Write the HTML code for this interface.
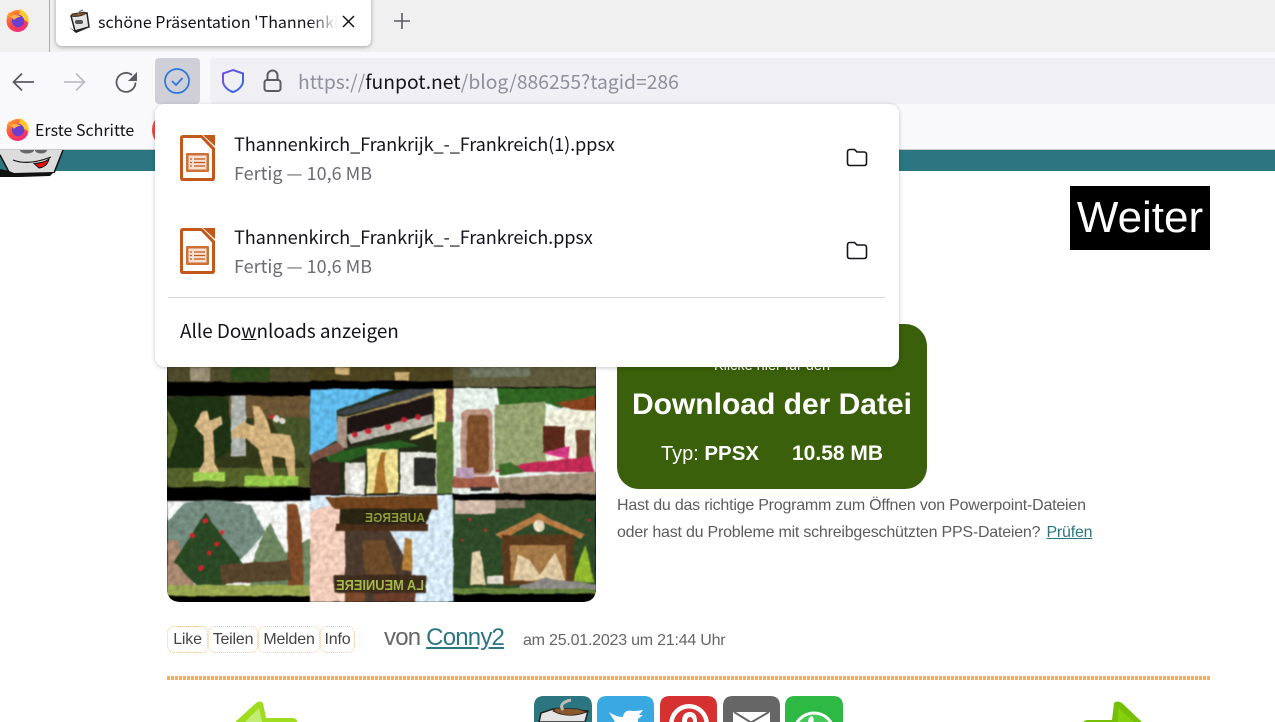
<!DOCTYPE html>
<html lang="de"><head><meta charset="utf-8"><title>schöne Präsentation 'Thannenkirch'</title>
<style>
*{box-sizing:border-box}
html,body{margin:0;padding:0;width:1275px;height:722px;overflow:hidden;background:#fff;font-family:"Liberation Sans",sans-serif}
.a{position:absolute;white-space:nowrap}
.ui{font-family:"Noto Sans CJK SC","Liberation Sans",sans-serif}
.btn{position:absolute;top:626px;height:27px;border:1px dotted #fdc58c;border-radius:7px;font-size:16px;line-height:26px;text-align:center;color:#444;letter-spacing:-.2px}
svg{position:absolute;overflow:visible}
</style></head><body>

<!-- page content -->
<div class="a" style="left:0;top:150px;width:1275px;height:21px;background:#2b7681"></div>
<svg style="left:0;top:150px" width="70" height="30" viewBox="0 0 70 30">
<path d="M0 4L8 20L10 24L53 23L63 0H0Z" fill="#dcdcdc"/>
<path d="M63 0L54 23" fill="none" stroke="#111" stroke-width="1.500"/>
<path d="M0 5L9 22" fill="none" stroke="#111" stroke-width="1.500"/>
<path d="M0 19L9 21L14 23L54 22L50 26L20 27L0 27Z" fill="#111"/>
<ellipse cx="27" cy="0" rx="7" ry="3.500" fill="#666"/><ellipse cx="41" cy="0" rx="6" ry="3.500" fill="#666"/>
<path d="M13 10Q28 16 51 7" fill="none" stroke="#111" stroke-width="1.200"/>
<path d="M34 13.500Q44 13 49 9Q47 17 39 18Z" fill="#e81010" stroke="#111"/>
</svg>
<div class="a" style="left:1070px;top:186px;width:140px;height:64px;background:#000;color:#fff;font-size:44px;line-height:64px;text-align:center">Weiter</div>

<!-- collage -->
<svg style="left:0;top:0" width="1275" height="722" viewBox="0 0 1275 722">
<defs>
<clipPath id="c"><path d="M167 360H596V588Q596 602 582 602H181Q167 602 167 588Z"/></clipPath>
<filter id="b" filterUnits="userSpaceOnUse" x="167" y="360" width="429" height="242" color-interpolation-filters="sRGB">
<feTurbulence type="fractalNoise" baseFrequency=".07" numOctaves="1" seed="4" result="n"/>
<feDisplacementMap in="SourceGraphic" in2="n" scale="3" xChannelSelector="R" yChannelSelector="G" result="d"/>
<feTurbulence type="fractalNoise" baseFrequency=".2" numOctaves="2" seed="9"/>
<feColorMatrix type="matrix" values="1.400 0 0 0 -.2 1.400 0 0 0 -.2 1.400 0 0 0 -.2 0 0 0 0 1" result="g"/>
<feComposite in="d" in2="g" operator="arithmetic" k1=".3" k2=".85" k3="0" k4="0"/>
<feGaussianBlur stdDeviation=".8"/>
</filter>
</defs>
<g clip-path="url(#c)"><rect x="167" y="360" width="429" height="242" fill="#000"/>
<g filter="url(#b)">
<rect x="167" y="360" width="429" height="242" fill="#000"/>
<!-- top strips -->
<rect x="167" y="360" width="143" height="22" fill="#4f4a2c"/><rect x="230" y="367" width="40" height="14" fill="#2f4a1c"/><rect x="190" y="367" width="20" height="14" fill="#9a8f76"/>
<rect x="310" y="360" width="143" height="21" fill="#4c4420"/><rect x="335" y="367" width="14" height="8" fill="#c9ab72"/><rect x="395" y="372" width="14" height="9" fill="#c9ab72"/>
<rect x="453" y="360" width="143" height="27" fill="#5e5a3c"/><rect x="470" y="367" width="60" height="10" fill="#6f7560"/>
<!-- r1c1 -->
<rect x="167" y="396" width="143" height="91" fill="#34381a"/>
<rect x="229" y="396" width="81" height="22" fill="#6a5434"/>
<path d="M167 398L195 396L228 398L232 450L200 470H167Z" fill="#1e3213"/>
<path d="M167 408L178 430L170 458H167Z" fill="#5a6c2a"/>
<rect x="231" y="396" width="15" height="60" fill="#aeb2ac"/>
<path d="M270 416L310 418V470L285 450Z" fill="#47542a"/>
<circle cx="277" cy="419" r="3.500" fill="#e6e0d8"/><circle cx="283" cy="421" r="3" fill="#e8e4de"/><circle cx="272" cy="417" r="2" fill="#c02030"/>
<rect x="167" y="468" width="143" height="19" fill="#55622a"/>
<path d="M202 411L207 410L209 420L221 416L222 424L213 431L215 462L219 472H198L204 462L204 436L194 426Z" fill="#d4b684"/>
<path d="M253 405L260 406L268 422L271 433L290 436L295 448L295 478H289L285 458L272 456L274 478H267L258 450L247 438L232 438L232 431L243 421L254 426Z" fill="#d0b07c"/>
<rect x="193" y="472" width="32" height="9" fill="#a2d054"/><rect x="244" y="476" width="54" height="10" fill="#94c648"/>
<!-- r1c2 -->
<rect x="310" y="389" width="143" height="105" fill="#242c18"/>
<path d="M310 389H394L336 411L338 440L310 456Z" fill="#5fb9ea"/>
<path d="M335 413L408 389H440L434 393L345 415Z" fill="#3e444a"/>
<path d="M342 418L434 392V396L345 422Z" fill="#a08a58"/>
<rect x="434" y="389" width="12" height="50" fill="#f0e496"/>
<path d="M410 440L440 432V424L412 436Z" fill="#f0e496"/>
<rect x="446" y="389" width="7" height="33" fill="#7a4a40"/>
<rect x="337" y="416" width="10" height="32" fill="#a49080"/>
<path d="M347 418L432 396V424L347 446Z" fill="#1e1614"/>
<path d="M347 434L432 414L434 424L350 444Z" fill="#b4b0a4"/>
<g fill="#c42232"><circle cx="355" cy="434" r="3"/><circle cx="368" cy="431" r="3"/><circle cx="388" cy="427" r="3"/><circle cx="404" cy="420" r="3"/><circle cx="418" cy="417" r="3"/></g>
<path d="M326 456L345 450L400 440L420 446L380 450L345 462L330 464Z" fill="#2a5c22"/>
<path d="M310 455L338 442L344 450L312 462Z" fill="#7a5244"/>
<rect x="310" y="462" width="30" height="32" fill="#3c2820"/>
<rect x="367" y="449" width="31" height="44" fill="#ecdc90"/>
<path d="M381 452L386 452L384 465L388 493H374L378 465Z" fill="#a8722e"/>
<rect x="345" y="462" width="20" height="32" fill="#d8d6cc"/><rect x="351" y="470" width="12" height="22" fill="#f2f2ee"/>
<rect x="400" y="452" width="37" height="42" fill="#e8e8e0"/><rect x="414" y="458" width="22" height="28" fill="#2c2c28"/>
<rect x="437" y="422" width="16" height="72" fill="#5a7a3a"/>
<!-- r1c3 -->
<rect x="453" y="388" width="143" height="106" fill="#e6efe8"/>
<path d="M497 388H596V402L560 408L540 402L500 410Z" fill="#2f6422"/>
<path d="M555 403L596 396V413L565 408Z" fill="#86421e"/>
<path d="M495 405L545 402L546 465L495 472Z" fill="#96a270"/>
<rect x="461" y="409" width="32" height="66" rx="8" fill="#b89080"/>
<rect x="467" y="415" width="22" height="58" rx="5" fill="#7e502c"/>
<rect x="546" y="410" width="50" height="50" fill="#ecedd8"/>
<rect x="543" y="426" width="22" height="26" fill="#5a2a1c"/><rect x="576" y="430" width="14" height="28" fill="#70402a"/>
<path d="M543 452L570 446L568 460Z" fill="#d73a84"/>
<path d="M496 470L525 464L590 456L594 472H496Z" fill="#c02a54"/>
<path d="M498 464L510 462L525 472L500 476Z" fill="#3d6a2a"/>
<path d="M453 476H495L499 488H453Z" fill="#a05c48"/><path d="M499 478L596 472V494H499Z" fill="#a08e76"/>
<rect x="456" y="468" width="18" height="10" fill="#b79ab0"/><rect x="470" y="487" width="22" height="4" fill="#2c2c2c"/>
<!-- r2c1 -->
<rect x="167" y="501" width="143" height="95" fill="#f4f6f4"/>
<path d="M185 503Q215 496 250 505L266 532L240 560H167V522Z" fill="#738a7e"/>
<path d="M255 553L270 522L285 553L310 538V590H250Z" fill="#6d8560"/>
<path d="M167 540H178L196 590H167Z" fill="#a88870"/>
<path d="M205 513L246 568L224 586H197L174 562Z" fill="#2a4824"/>
<path d="M287 504L297 505L301 522L304 590H288Z" fill="#7d4a28"/>
<rect x="167" y="585" width="143" height="11" fill="#98a650"/>
<path d="M220 565L290 560L292 580L222 584Z" fill="#57442c"/>
<g fill="#d0242a"><circle cx="205" cy="521" r="2.500"/><circle cx="192" cy="535" r="2.500"/><circle cx="217" cy="544" r="2.500"/><circle cx="209" cy="553" r="2.500"/><circle cx="201" cy="568" r="3"/><circle cx="222" cy="532" r="2"/></g>
<!-- r2c2 -->
<rect x="310" y="495" width="143" height="107" fill="#d6e8f6"/>
<path d="M310 512L345 500L345 602H310Z" fill="#f2ccba"/>
<path d="M325 497L437 495L438 510L335 509Z" fill="#70441e"/>
<path d="M340 509H432L426 522L426 526H340Z" fill="#2a2413"/>
<rect x="336" y="524" width="92" height="7" fill="#4a2f1a"/>
<path d="M345 531H390L412 570L410 602H345Z" fill="#4a3a2e"/>
<path d="M362 540H385L396 575H365Z" fill="#6b4a2a"/>
<path d="M405 537L412 539L412 572L402 570Z" fill="#b07d3a"/>
<rect x="334" y="575" width="92" height="18" fill="#3e2d1c"/>
<rect x="345" y="593" width="20" height="9" fill="#7a4a2c"/><rect x="375" y="593" width="40" height="9" fill="#6a3d2a"/>
<!-- r2c3 -->
<rect x="453" y="500" width="143" height="93" fill="#2f4a28"/>
<rect x="455" y="500" width="40" height="14" fill="#d0b9a8"/><rect x="495" y="500" width="30" height="8" fill="#8a7a68"/>
<path d="M495 535L539 513L585 535L580 539L539 520L502 539Z" fill="#b57a45"/>
<rect x="502" y="535" width="72" height="50" fill="#5a3a1e"/>
<rect x="510" y="545" width="56" height="36" fill="#a57a48"/>
<path d="M513 580L518 555L530 560L540 575L555 552L566 580Z" fill="#dcc7a0"/>
<path d="M472 552L480 550L486 585H470Z" fill="#dccca8"/>
<rect x="487" y="576" width="16" height="8" fill="#ddd6c8"/>
<circle cx="539" cy="526" r="6" fill="#e8dcc0"/>
<path d="M574 575L586 545L594 582H574Z" fill="#91b82e"/>
<rect x="453" y="588" width="143" height="6" fill="#64803a"/>
<path d="M520 586L545 578L596 584V589H520Z" fill="#8c8a84"/>
<g fill="#c3242a"><circle cx="470" cy="520" r="1.500"/><circle cx="485" cy="530" r="1.500"/><circle cx="462" cy="540" r="1.500"/><circle cx="590" cy="520" r="1.500"/></g>
</g>
<g font-family="Liberation Sans,sans-serif" font-weight="bold" fill="#8f9c3c">
<text transform="translate(425,522) scale(-1,1)" font-size="13" textLength="60" lengthAdjust="spacingAndGlyphs">AUBERGE</text>
<text transform="translate(424,590) scale(-1,1)" fill="#a4b84a" textLength="88" lengthAdjust="spacingAndGlyphs" font-size="15">LA MEUNIERE</text>
</g>
</g>
</svg>

<!-- green download -->
<div class="a" style="left:617px;top:324px;width:310px;height:165px;background:#3a600b;border-radius:22px;color:#fff;text-align:center">
<div class="a" style="left:0;width:310px;top:34px;font-size:14.500px;line-height:16px">Klicke hier für den</div>
<div class="a" style="left:0;width:310px;top:62px;font-size:30px;line-height:38px;font-weight:bold">Download der Datei</div>
<div class="a" style="left:44px;top:117px;font-size:20px;line-height:25px">Typ: <b style="font-size:20.500px">PPSX</b></div>
<div class="a" style="left:175px;top:117px;font-size:21px;line-height:25px;font-weight:bold">10.58 MB</div>
</div>
<div class="a" style="left:617px;top:492px;font-size:16px;line-height:27px;color:#5c5c5c;letter-spacing:-.22px">Hast du das richtige Programm zum Öffnen von Powerpoint-Dateien<br>oder hast du Probleme mit schreibgeschützten PPS-Dateien? <span style="color:#2b7681;text-decoration:underline;margin-left:2px">Prüfen</span></div>

<div class="btn" style="left:167px;width:41px">Like</div>
<div class="btn" style="left:208px;width:50px">Teilen</div>
<div class="btn" style="left:258px;width:62px">Melden</div>
<div class="btn" style="left:320px;width:35px">Info</div>
<div class="a" style="left:384px;top:623px;font-size:24px;line-height:29px;color:#666;letter-spacing:-.8px">von <span style="color:#2b7681;text-decoration:underline">Conny2</span></div>
<div class="a" style="left:523px;top:631px;font-size:16px;line-height:19px;color:#666;letter-spacing:-.22px">am 25.01.2023 um 21:44 Uhr</div>
<div class="a" style="left:167px;top:676px;width:1043px;height:4px;background:repeating-linear-gradient(90deg,#fcac4e 0 3px,transparent 3px 4px)"></div>

<!-- arrows + share icons -->
<svg style="left:0;top:0" width="1275" height="722" viewBox="0 0 1275 722">
<path d="M233 724L256 703Q260 700 263 703L266 718H292Q297 718 297 722V730H233Z" fill="#a0dc1e"/>
<path d="M245 722L259 708L262 722Z" fill="#c2ec74"/>
<path d="M1144 724L1122 703Q1117 700 1114 703L1112 720H1088Q1083 720 1083 724V730H1144Z" fill="#76bf06"/>
<path d="M1118 708L1134 722H1118Z" fill="#83d10a"/>
<path d="M534 722V706Q534 696 544 696H582Q592 696 592 706V722Z" fill="#2b7681"/>
<path d="M539 722L541 713L553 709L588 711L585 722Z" fill="#e4e4e4" stroke="#222" stroke-width="1.500"/>
<path d="M553 711Q568 719 587 712L578 709L556 708Z" fill="#8a5a2c" stroke="#222" stroke-width=".8"/>
<path d="M563 710Q558 703 571 700" fill="none" stroke="#bbb" stroke-width="3"/>
<path d="M597 722V706Q597 696 607 696H644Q654 696 654 706V722Z" fill="#3aa9e1"/>
<path d="M609 712Q616 717 623 717Q624 709 633 711Q637 711 643 710L639 715L643 715L638 719V722H615Z" fill="#fff"/>
<path d="M660 722V706Q660 696 670 696H707Q717 696 717 706V722Z" fill="#d63131"/>
<circle cx="689" cy="724" r="20" fill="#fff"/><circle cx="689" cy="724" r="15.500" fill="#d63131"/>
<path d="M682 722Q682 712 690 712Q697 712 697 722Z" fill="#fff"/><path d="M687 722Q687 717 690 717Q693 717 693 722Z" fill="#d63131"/>
<path d="M723 722V706Q723 696 733 696H770Q780 696 780 706V722Z" fill="#666"/>
<path d="M733 722V712H770V722" fill="#fff"/><path d="M734 712L751 722.500L769 712" fill="none" stroke="#666" stroke-width="2"/>
<path d="M785 722V706Q785 696 795 696H833Q843 696 843 706V722Z" fill="#2eb844"/>
<circle cx="814" cy="733" r="21.500" fill="#fff"/><circle cx="814" cy="733" r="18.500" fill="#45c95b"/>
<path d="M808 723Q808 717 812 716Q815 719 813 723Z" fill="#fff"/>
</svg>

<!-- browser chrome -->
<div class="a" style="left:0;top:0;width:1275px;height:52px;background:#f0f0f0"></div>
<div class="a" style="left:49px;top:0;width:1px;height:52px;background:#aaaab0"></div>
<div class="a" style="left:56px;top:-6px;width:315px;height:52px;background:#fff;border-radius:6px;box-shadow:0 1px 4px rgba(0,0,0,.35)"></div>
<div class="a" style="left:0;top:52px;width:1275px;height:98px;background:#f9f9fb;border-bottom:1px solid #c8c8cc"></div>
<div class="a" style="left:155px;top:58px;width:45px;height:46px;background:#cfcfd8;border-radius:4px"></div>
<div class="a" style="left:210px;top:58px;width:1065px;height:46px;background:#f0f0f4;border-radius:4px 0 0 4px"></div>

<svg style="left:0;top:0" width="430" height="150" viewBox="0 0 430 150">
<defs>
<linearGradient id="ff" x1=".2" y1="0" x2=".8" y2="1"><stop offset="0" stop-color="#ff9a2a"/><stop offset=".5" stop-color="#ff4a3e"/><stop offset="1" stop-color="#e8268a"/></linearGradient>
<g id="fx">
<circle cx="11.500" cy="12" r="11" fill="url(#ff)"/>
<path d="M14 0Q24 5 22.500 14L13 7Z" fill="#ffc82e"/>
<path d="M0.500 8L3 3L5 6Z" fill="#ff9a2e"/>
<circle cx="12" cy="12" r="6.200" fill="#6a3fd0"/>
<path d="M3 8Q8 4 15 7.500Q10 8.500 8 11Q6 7.500 3 8Z" fill="#ffb048"/>
</g>
</defs>
<use href="#fx" x="6" y="9"/>
<use href="#fx" x="6" y="118"/>
<path d="M155 120Q152 124 152 130Q152 136 155 140Z" fill="#f04a4a"/>
<!-- favicon -->
<path d="M71 16L87 13L89 27L75 31Z" fill="#e4e4e4" stroke="#222" stroke-width="1.500"/>
<path d="M69 27L75 31L88 28L76 33Z" fill="#222"/>
<path d="M71 16Q79 18 87 13L84 12L72 14Z" fill="#7a4a20" stroke="#222" stroke-width=".7"/>
<path d="M79 15Q77 12 83 10" fill="none" stroke="#777" stroke-width="1.200"/>
<rect x="75" y="20" width="8" height="4" rx="2" fill="#555"/>
<!-- tab close, plus -->
<path d="M343 16L354 27M354 16L343 27" stroke="#15141a" stroke-width="1.500" fill="none"/>
<path d="M402 13V29M394 21H410" stroke="#5b5b66" stroke-width="1.600" fill="none"/>
<!-- nav -->
<path d="M34 82H14M22 73.500L13.500 82L22 90.500" fill="none" stroke="#5b5b66" stroke-width="1.800"/>
<path d="M64 82H84M76 73.500L84.500 82L76 90.500" fill="none" stroke="#bdbdc2" stroke-width="1.800"/>
<path d="M135.500 82.500A9.500 9.500 0 1 1 132 75" fill="none" stroke="#5b5b66" stroke-width="1.800"/>
<path d="M137 72V81H128Z" fill="#5b5b66"/>
<circle cx="177" cy="81" r="12" fill="none" stroke="#2a76de" stroke-width="1.700"/>
<path d="M172 81L176 85L182.500 78" fill="none" stroke="#2a76de" stroke-width="1.700"/>
<linearGradient id="sh" x1="0" y1="0" x2="1" y2="1"><stop offset="0" stop-color="#7a4fe0"/><stop offset="1" stop-color="#2a6de0"/></linearGradient>
<path d="M233 70L243 73.500V81C243 86 238 90.500 233 92C228 90.500 223 86 223 81V73.500Z" fill="none" stroke="url(#sh)" stroke-width="2"/>
<rect x="264.500" y="80" width="16" height="11" rx="2.500" fill="none" stroke="#5b5b66" stroke-width="2"/>
<path d="M267.500 80V75.500a5 5 0 0 1 10 0V80" fill="none" stroke="#5b5b66" stroke-width="2"/>
</svg>
<div class="a ui" style="left:98px;top:9px;width:240px;height:26px;overflow:hidden;font-size:16px;line-height:24px;color:#15141a;-webkit-mask-image:linear-gradient(90deg,#000 88%,transparent 100%);mask-image:linear-gradient(90deg,#000 88%,transparent 100%)">schöne Präsentation 'Thannenkirch'</div>
<div class="a ui" style="left:298px;top:67px;font-size:19.300px;line-height:28px;color:#8f8f9d">https://<span style="color:#15141a">funpot.net</span>/blog/886255?tagid=286</div>
<div class="a ui" style="left:35px;top:117px;font-size:16px;line-height:24px;color:#15141a">Erste Schritte</div>

<!-- downloads panel -->
<div class="a" style="left:155px;top:104px;width:744px;height:263px;background:#fff;border-radius:10px;box-shadow:0 1px 5px rgba(0,0,0,.22)"></div>
<svg style="left:155px;top:104px" width="744" height="263" viewBox="0 0 744 263">
<defs><g id="doc">
<path d="M3 0H22L35 13V43Q35 46 32 46H3Q0 46 0 43V3Q0 0 3 0Z" fill="#c3581a"/>
<path d="M3 3H21L32 14.500V43H3Z" fill="#fff"/>
<path d="M23 0H35V11Z" fill="#c3581a"/>
<rect x="6" y="18" width="23" height="19" rx="1" fill="#cf7039"/><rect x="8.500" y="20.500" width="18" height="14" fill="#f6e0d2"/>
<path d="M10 24H12M14 24H25M10 27.500H12M14 27.500H25M10 31H12M14 31H25" stroke="#c3581a" stroke-width="1.300"/>
</g>
<path id="fo" d="M1 3.500Q1 1 3.500 1H8L10.500 3.500H17.500Q20 3.500 20 6V14.500Q20 17 17.500 17H3.500Q1 17 1 14.500Z" fill="none" stroke="#15141a" stroke-width="1.600"/></defs>
<use href="#doc" x="25" y="31"/><use href="#doc" x="25" y="124"/>
<use href="#fo" x="691.500" y="44.500"/><use href="#fo" x="691.500" y="137.500"/>
<rect x="13" y="193" width="717" height="1" fill="#d8d8dc"/>
</svg>
<div class="a ui" style="left:234px;top:131px;font-size:18.200px;line-height:26px;color:#15141a;letter-spacing:-.14px">Thannenkirch_Frankrijk_-_Frankreich(1).ppsx</div>
<div class="a ui" style="left:234px;top:161px;font-size:18px;line-height:24px;color:#6b6b72">Fertig — 10,6 MB</div>
<div class="a ui" style="left:234px;top:224px;font-size:18.200px;line-height:26px;color:#15141a;letter-spacing:-.14px">Thannenkirch_Frankrijk_-_Frankreich.ppsx</div>
<div class="a ui" style="left:234px;top:254px;font-size:18px;line-height:24px;color:#6b6b72">Fertig — 10,6 MB</div>
<div class="a ui" style="left:180px;top:318px;font-size:18.900px;line-height:26px;color:#15141a">Alle Do<span style="text-decoration:underline">w</span>nloads anzeigen</div>
</body></html>
